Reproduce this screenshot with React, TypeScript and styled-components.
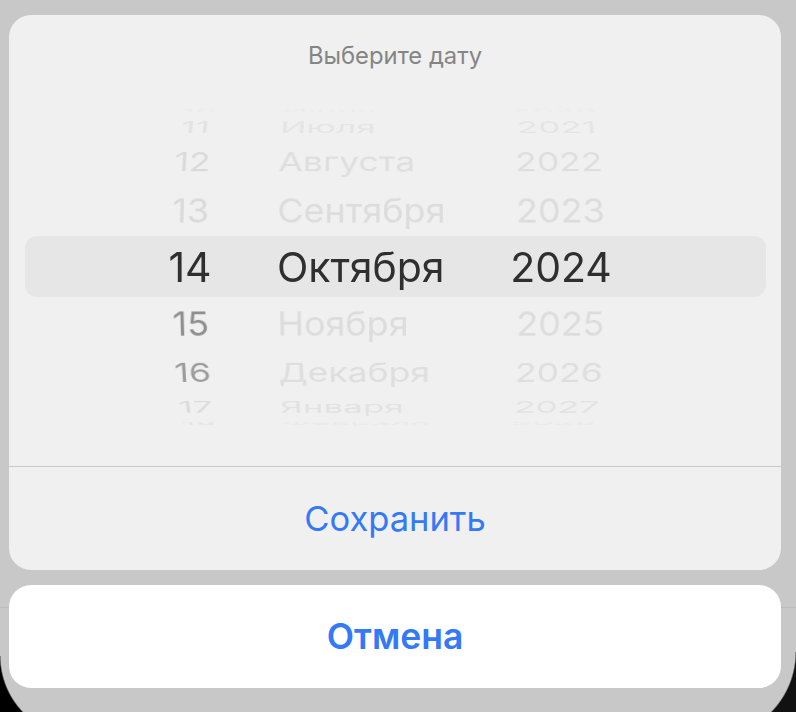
import React from "react"
import styled, { createGlobalStyle } from "styled-components"

const RADIUS = 166
const STEP = 20

const GlobalStyle = createGlobalStyle`
  html, body {
    margin: 0;
    height: 100%;
  }
  body {
    background: linear-gradient(
      to bottom,
      #c8c8c8 607px,
      #bcbcbc 607px,
      #bcbcbc 608px,
      #c8c8c8 608px
    );
    font-family: Inter, "Noto Sans", sans-serif;
    overflow: hidden;
  }
`

const Screen = styled.div`
  height: 712px;
  box-sizing: border-box;
  padding: 15px 15px 0 9px;
  display: flex;
  flex-direction: column;
  gap: 15px;
`

const Sheet = styled.div`
  background: #f0f0f0;
  border-radius: 22px;
  display: flex;
  flex-direction: column;
  overflow: hidden;
`

const Title = styled.div`
  height: 80px;
  box-sizing: border-box;
  padding-top: 28px;
  text-align: center;
  font-size: 23.8px;
  line-height: 26px;
  color: #858585;
`

const Picker = styled.div`
  height: 343px;
  display: grid;
  grid-template-areas: "stack";
  align-items: center;
`

const Band = styled.div`
  grid-area: stack;
  height: 61px;
  margin: 0 15px 0 16px;
  border-radius: 12px;
  background: #e5e6e5;
`

const Columns = styled.div`
  grid-area: stack;
  height: 100%;
  display: flex;
  padding-left: 131px;
`

const Column = styled.div<{ $width: number; $align: string; $origin: number }>`
  width: ${p => p.$width}px;
  height: 100%;
  display: grid;
  grid-template-areas: "stack";
  align-items: center;
  text-align: ${p => p.$align};
  perspective: 3000px;
  perspective-origin: calc(50% + ${p => p.$origin}px) 50%;
`

const MonthColumn = styled(Column)`
  margin-left: 37px;
`

// the selected row is magnified a little, as in the iOS wheel
const Item = styled.div<{ $offset: number; $color: string }>`
  grid-area: stack;
  height: 58px;
  line-height: 58px;
  font-size: ${p => (p.$offset === 0 ? 41 : 36)}px;
  white-space: nowrap;
  color: ${p => p.$color};
  backface-visibility: hidden;
  transform: translateZ(-${RADIUS}px) rotateX(${p => -p.$offset * STEP}deg)
    translateZ(${RADIUS}px);
`

const Divider = styled.div`
  margin-top: 28px;
  height: 1px;
  background: #c9c9c9;
`

const ActionButton = styled.button<{ $bold?: boolean }>`
  height: 103px;
  border: none;
  background: transparent;
  font-family: inherit;
  font-size: ${p => (p.$bold ? 35.5 : 34.5)}px;
  font-weight: ${p => (p.$bold ? 600 : 400)};
  color: #3479f5;
  padding: 0;
`

const CancelSheet = styled.div`
  background: #ffffff;
  border-radius: 22px;
  display: flex;
  flex-direction: column;
`

// rounded corners of the phone screen, over everything
const Corner = styled.div<{ $side: "left" | "right" }>`
  position: fixed;
  bottom: 0;
  ${p => p.$side}: 0;
  width: ${p => (p.$side === "left" ? 81 : 86)}px;
  height: ${p => (p.$side === "left" ? 56 : 60)}px;
  pointer-events: none;
  background: ${p =>
    p.$side === "left"
      ? "radial-gradient(circle 81px at 100% 0, transparent 80px, #000 81.5px)"
      : "radial-gradient(circle 86px at 0 0, transparent 85px, #111 86.5px)"};
`

const days = ["10", "11", "12", "13", "14", "15", "16", "17", "18"]
const dayColors = [
  "#ececec",
  "#e2e2e2",
  "#dadada",
  "#dadada",
  "#2f2f2f",
  "#8f8f8f",
  "#9c9c9c",
  "#dcdcdc",
  "#e6e6e6",
]
const months = [
  "Июня",
  "Июля",
  "Августа",
  "Сентября",
  "Октября",
  "Ноября",
  "Декабря",
  "Января",
  "Февраля",
]
const years = ["2020", "2021", "2022", "2023", "2024", "2025", "2026", "2027", "2028"]
const fadedColors = [
  "#ececec",
  "#e4e4e4",
  "#dedede",
  "#dcdcdc",
  "#2f2f2f",
  "#dcdcdc",
  "#dedede",
  "#e2e2e2",
  "#eaeaea",
]

export default function App() {
  return (
    <>
      <GlobalStyle />
      <Screen>
        <Sheet>
          <Title>Выберите дату</Title>
          <Picker>
            <Band />
            <Columns>
              <Column $width={100} $align="center" $origin={205}>
                {days.map((d, i) => (
                  <Item key={d} $offset={i - 4} $color={dayColors[i]}>
                    {d}
                  </Item>
                ))}
              </Column>
              <MonthColumn $width={200} $align="left" $origin={18}>
                {months.map((m, i) => (
                  <Item key={m} $offset={i - 4} $color={fadedColors[i]}>
                    {m}
                  </Item>
                ))}
              </MonthColumn>
              <Column $width={168} $align="center" $origin={-166}>
                {years.map((y, i) => (
                  <Item key={y} $offset={i - 4} $color={fadedColors[i]}>
                    {y}
                  </Item>
                ))}
              </Column>
            </Columns>
          </Picker>
          <Divider />
          <ActionButton>Сохранить</ActionButton>
        </Sheet>
        <CancelSheet>
          <ActionButton $bold>Отмена</ActionButton>
        </CancelSheet>
      </Screen>
      <Corner $side="left" />
      <Corner $side="right" />
    </>
  )
}
